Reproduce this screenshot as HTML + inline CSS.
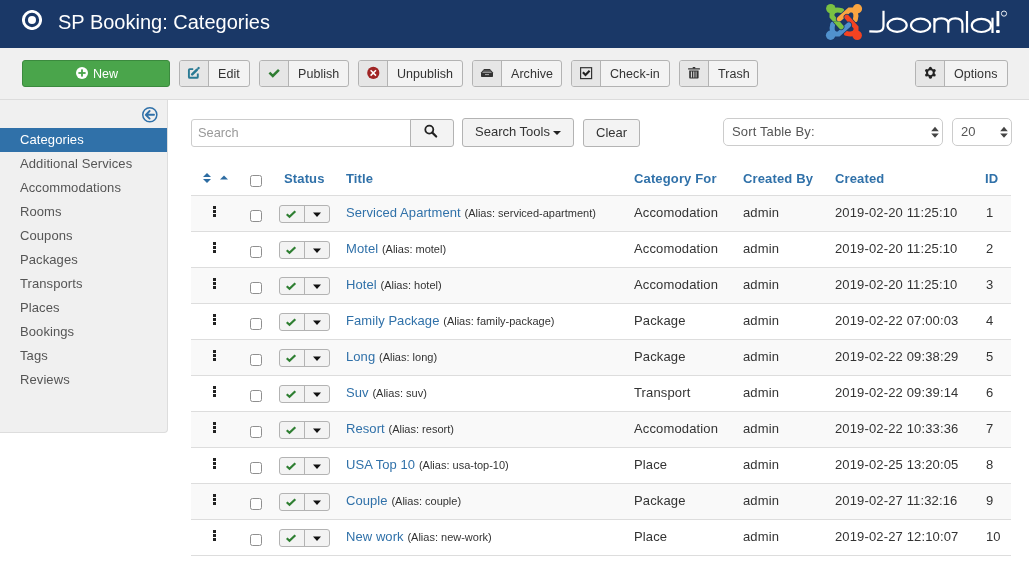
<!DOCTYPE html>
<html><head><meta charset="utf-8">
<style>
*{box-sizing:border-box;margin:0;padding:0}
html,body{width:1029px;height:568px;overflow:hidden;background:#fff}
body{font-family:"Liberation Sans",sans-serif;font-size:13px;color:#333;position:relative;letter-spacing:0.14px}
.abs{position:absolute}
#hdr{left:0;top:0;width:1029px;height:48px;background:#1a3867}
#hdr .ttl{left:58px;top:10px;color:#fff;font-size:20px;line-height:24px;white-space:nowrap;letter-spacing:0}
#sub{left:0;top:48px;width:1029px;height:52px;background:#f0f0f0;border-bottom:1px solid #dcdcdc}
.btn{position:absolute;top:60px;height:27px;border:1px solid #b3b3b3;border-radius:3px;background:#f3f3f3;color:#333;font-size:12.5px;line-height:25px;white-space:nowrap;overflow:hidden;letter-spacing:0.05px}
.btn .ic{position:absolute;left:0;top:0;width:29px;height:25px;line-height:0;background:#e6e6e6;border-right:1px solid #b3b3b3}
.btn .tx{position:absolute;top:1px}
.btn.green{background:#4aa54b;border-color:#3b8a3e;color:#fff}
#side{left:0;top:100px;width:168px;height:333px;background:#f0f0f0;border-right:1px solid #ddd;border-bottom:1px solid #ddd;border-bottom-right-radius:4px}
.nav{position:absolute;left:0;width:167px;height:24px;line-height:24px;padding-left:20px;color:#555;font-size:13px;letter-spacing:0.09px}
.nav.act{background:#3071a9;color:#fff}
.inp{position:absolute;border:1px solid #ccc;background:#fff;border-radius:3px}
.al{font-size:11px;color:#333;letter-spacing:0}
.thead .h{position:absolute;top:170px;line-height:18px;color:#3071a9;font-weight:bold}
.sorti{position:absolute;left:203px;top:173px;line-height:0}
.sorti2{position:absolute;left:220px;top:175px;line-height:0}
.row{position:absolute;left:191px;width:820px;height:36px;border-top:1px solid #ddd}
.row.odd{background:#f9f9f9}
.row .c{position:absolute;top:8px;line-height:18px;white-space:nowrap}
.row .ttl{left:155px}
.row .ttl a{color:#3071a9;letter-spacing:0.07px}
.row .cf{left:443px}
.row .cby{left:552px}
.row .cr{left:644px}
.row .cid{left:795px}
.drag{position:absolute;left:22px;top:10px;width:3px;height:11px;background:repeating-linear-gradient(#222 0 3px,transparent 3px 4px)}
.cb{position:absolute;width:12px;height:12px;border:1px solid #8f8f8f;border-radius:2.5px;background:#fff}
.hcb{left:250px;top:175px}
.rcb{left:59px;top:14px}
.grp{position:absolute;left:88px;top:9px;width:51px;height:18px;border:1px solid #b3b3b3;border-radius:3px;background:#f3f3f3}
.grp .gl{position:absolute;left:0;top:0;width:25px;height:16px;border-right:1px solid #b3b3b3;text-align:center;line-height:0;padding-top:3px}
.grp .gr{position:absolute;left:25px;top:0;width:24px;height:16px;text-align:center;line-height:0;padding-top:5.6px}
#wrap{position:absolute;left:0;top:0;width:1029px;height:568px;will-change:transform}
</style></head><body><div id="wrap">
<div id="hdr" class="abs">
  <svg class="abs" style="left:22px;top:10px" width="20" height="20" viewBox="0 0 20 20"><circle cx="10" cy="10" r="8.6" fill="none" stroke="#fff" stroke-width="2.9"/><circle cx="10" cy="10" r="4" fill="#fff"/></svg>
  <div class="ttl abs">SP Booking: Categories</div>
  <svg class="abs" style="left:822px;top:0" width="200" height="44" viewBox="822 0 200 44">
    <g transform="translate(822,0)"><g transform="rotate(0 22 22)"><path d="M19.6,10.7 Q12,8.6 10,13.5 V16.6 L19.2,26.8" fill="none" stroke="#1a3867" stroke-width="6.4" stroke-linecap="round"/><path d="M19.6,10.7 Q12,8.6 10,13.5 V16.6 L19.2,26.8" fill="none" stroke="#7ac143" stroke-width="5" stroke-linecap="round"/><circle cx="8.8" cy="8.6" r="4.7" fill="#7ac143"/></g><g transform="rotate(90 22 22)"><path d="M19.6,10.7 Q12,8.6 10,13.5 V16.6 L19.2,26.8" fill="none" stroke="#1a3867" stroke-width="6.4" stroke-linecap="round"/><path d="M19.6,10.7 Q12,8.6 10,13.5 V16.6 L19.2,26.8" fill="none" stroke="#f9a541" stroke-width="5" stroke-linecap="round"/><circle cx="8.8" cy="8.6" r="4.7" fill="#f9a541"/></g><g transform="rotate(180 22 22)"><path d="M19.6,10.7 Q12,8.6 10,13.5 V16.6 L19.2,26.8" fill="none" stroke="#1a3867" stroke-width="6.4" stroke-linecap="round"/><path d="M19.6,10.7 Q12,8.6 10,13.5 V16.6 L19.2,26.8" fill="none" stroke="#f44321" stroke-width="5" stroke-linecap="round"/><circle cx="8.8" cy="8.6" r="4.7" fill="#f44321"/></g><g transform="rotate(270 22 22)"><path d="M19.6,10.7 Q12,8.6 10,13.5 V16.6 L19.2,26.8" fill="none" stroke="#1a3867" stroke-width="6.4" stroke-linecap="round"/><path d="M19.6,10.7 Q12,8.6 10,13.5 V16.6 L19.2,26.8" fill="none" stroke="#5091cd" stroke-width="5" stroke-linecap="round"/><circle cx="8.8" cy="8.6" r="4.7" fill="#5091cd"/></g><clipPath id="cl"><rect x="11" y="21.5" width="15" height="12"/></clipPath><g clip-path="url(#cl)"><path d="M19.6,10.7 Q12,8.6 10,13.5 V16.6 L19.2,26.8" fill="none" stroke="#1a3867" stroke-width="6.4" stroke-linecap="round"/><path d="M19.6,10.7 Q12,8.6 10,13.5 V16.6 L19.2,26.8" fill="none" stroke="#7ac143" stroke-width="5" stroke-linecap="round"/></g></g>
    <g fill="none" stroke="#fff" stroke-width="2.2">
      <path d="M883.5,10.8 V26 C883.5,30.2 881.5,31.7 877,31.7 L869.3,31.3"/>
      <ellipse cx="897.1" cy="25.25" rx="9.6" ry="6.6"/>
      <ellipse cx="920.6" cy="25.25" rx="9.6" ry="6.6"/>
      <path d="M934.4,32.8 V18 M934.4,24 Q934.4,18.4 941.35,18.4 Q948.3,18.4 948.3,24 V32.8 M948.3,24 Q948.3,18.4 955.35,18.4 Q962.4,18.4 962.4,24 V32.8"/>
      <path d="M967,11 V32.8"/>
      <ellipse cx="981.4" cy="25.4" rx="9.6" ry="6.6"/>
      <path d="M992.5,17.7 V33"/>
      <path d="M997.9,11 V26.3" stroke-width="2.8"/>
      <circle cx="1004" cy="13.6" r="2.6" stroke-width="0.9"/>
    </g>
    <rect x="996" y="30" width="3.8" height="3" rx="1" fill="#fff"/>
  </svg>
</div>
<div id="sub" class="abs"></div>

<div class="btn green" style="left:22px;width:148px"><svg class="abs" style="left:52px;top:5px" width="14" height="14" viewBox="0 0 14 14"><circle cx="7" cy="7" r="6" fill="#fff"/><rect x="6.1" y="3.4" width="1.8" height="7.2" fill="#4aa54b"/><rect x="3.4" y="6.1" width="7.2" height="1.8" fill="#4aa54b"/></svg><span class="tx" style="left:70px">New</span></div>
<div class="btn" style="left:179px;width:71px"><span class="ic"><svg width="28" height="25" viewBox="0 0 28 25"><path d="M13.2,8.1 H9.8 Q8.9,8.1 8.9,9 V15.9 Q8.9,16.8 9.8,16.8 H16.9 Q17.8,16.8 17.8,15.9 V12.6" fill="none" stroke="#2a7a94" stroke-width="1.9"/><path d="M12.2,13.4 L16.8,8.8" stroke="#2a7a94" stroke-width="2.6" stroke-linecap="round"/><path d="M18.3,7.4 L18.7,7" stroke="#2a7a94" stroke-width="2.2" stroke-linecap="round"/></svg></span><span class="tx" style="left:38px">Edit</span></div>
<div class="btn" style="left:259px;width:90px"><span class="ic"><svg width="28" height="25" viewBox="0 0 28 25"><path d="M9.4,11.6 L12.8,14.9 L18.9,8.8" fill="none" stroke="#2f7d32" stroke-width="2.5"/></svg></span><span class="tx" style="left:38px">Publish</span></div>
<div class="btn" style="left:358px;width:105px"><span class="ic"><svg width="28" height="25" viewBox="0 0 28 25"><circle cx="14.3" cy="11.9" r="6.1" fill="#a02525"/><path d="M11.6,9.2 L17,14.6 M17,9.2 L11.6,14.6" stroke="#fff" stroke-width="1.5"/></svg></span><span class="tx" style="left:38px">Unpublish</span></div>
<div class="btn" style="left:472px;width:90px"><span class="ic"><svg width="28" height="25" viewBox="0 0 28 25"><path d="M11.1,8 H16.9 L20,11.6 V15.2 Q20,16 19.2,16 H8.8 Q8,16 8,15.2 V11.6 Z" fill="#333"/><rect x="10.2" y="9.4" width="7.6" height="1.6" fill="#666"/><rect x="9.5" y="11.2" width="9" height="0.8" fill="#aaa"/><rect x="12" y="13.2" width="4" height="0.9" fill="#bbb"/></svg></span><span class="tx" style="left:38px">Archive</span></div>
<div class="btn" style="left:571px;width:99px"><span class="ic"><svg width="28" height="25" viewBox="0 0 28 25"><rect x="8.6" y="6.7" width="11" height="10.9" fill="none" stroke="#333" stroke-width="1.2"/><path d="M10.9,11.3 L13.5,14 L17.6,9.7" fill="none" stroke="#222" stroke-width="2.1"/></svg></span><span class="tx" style="left:38px">Check-in</span></div>
<div class="btn" style="left:679px;width:79px"><span class="ic"><svg width="28" height="25" viewBox="0 0 28 25"><rect x="8" y="7.2" width="12" height="1.4" rx="0.5" fill="#333"/><rect x="12.6" y="6.1" width="2.8" height="1.4" rx="0.7" fill="#333"/><path d="M9.2,9.4 H18.6 V16.8 Q18.6,17.6 17.8,17.6 H10 Q9.2,17.6 9.2,16.8 Z" fill="#333"/><rect x="10.9" y="10.5" width="1" height="6" fill="#e6e6e6"/><rect x="13.3" y="10.5" width="1" height="6" fill="#e6e6e6"/><rect x="15.5" y="10.5" width="1.2" height="6" fill="#aaa"/></svg></span><span class="tx" style="left:38px">Trash</span></div>
<div class="btn" style="left:915px;width:93px"><span class="ic"><svg width="28" height="25" viewBox="0 0 28 25"><g transform="translate(14.4,11.75)"><circle r="4.4" fill="#222"/><g fill="#222"><circle cx="0" cy="-4.4" r="1.5"/><circle cx="3.81" cy="-2.2" r="1.5"/><circle cx="3.81" cy="2.2" r="1.5"/><circle cx="0" cy="4.4" r="1.5"/><circle cx="-3.81" cy="2.2" r="1.5"/><circle cx="-3.81" cy="-2.2" r="1.5"/></g><circle r="2.4" fill="#e6e6e6"/></g></svg></span><span class="tx" style="left:38px">Options</span></div>

<div id="side" class="abs">
  <div class="nav act" style="top:28px">Categories</div>
  <div class="nav" style="top:52px">Additional Services</div>
  <div class="nav" style="top:76px">Accommodations</div>
  <div class="nav" style="top:100px">Rooms</div>
  <div class="nav" style="top:124px">Coupons</div>
  <div class="nav" style="top:148px">Packages</div>
  <div class="nav" style="top:172px">Transports</div>
  <div class="nav" style="top:196px">Places</div>
  <div class="nav" style="top:220px">Bookings</div>
  <div class="nav" style="top:244px">Tags</div>
  <div class="nav" style="top:268px">Reviews</div>
</div>

<div class="inp" style="left:191px;top:119px;width:220px;height:28px;border-radius:3px 0 0 3px"></div>
<div class="abs" style="left:198px;top:119px;line-height:28px;color:#999;font-size:12.8px;letter-spacing:0">Search</div>
<div class="btn" style="left:410px;top:119px;width:44px;height:28px;border-radius:0 3px 3px 0"><svg class="abs" style="left:0;top:0" width="42" height="26" viewBox="0 0 42 26"><circle cx="18.3" cy="9.6" r="4" fill="none" stroke="#222" stroke-width="1.8"/><path d="M21.3,12.6 L25.2,16.5" stroke="#222" stroke-width="2.2" stroke-linecap="round"/></svg></div>
<div class="btn" style="left:462px;top:118px;width:112px;height:29px;font-size:13px"><span class="tx" style="left:12px;top:0;line-height:25px;letter-spacing:0">Search Tools</span><i class="abs" style="left:90px;top:12px;width:0;height:0;border-left:4px solid transparent;border-right:4px solid transparent;border-top:4px solid #222"></i></div>
<div class="btn" style="left:583px;top:119px;width:57px;height:28px;font-size:13px"><span class="tx" style="left:12px;top:0;letter-spacing:0">Clear</span></div>
<div class="inp" style="left:723px;top:118px;width:220px;height:28px;border-radius:5px"></div>
<div class="abs" style="left:732px;top:118px;line-height:28px;color:#555">Sort Table By:</div>
<svg class="abs" style="left:930px;top:125px" width="10" height="14" viewBox="0 0 10 14"><path d="M1.2,6.2 L5,1.8 L8.8,6.2 Z M1.2,8.4 L8.8,8.4 L5,12.8 Z" fill="#444"/></svg>
<div class="inp" style="left:952px;top:118px;width:60px;height:28px;border-radius:5px"></div>
<div class="abs" style="left:961px;top:118px;line-height:28px;color:#555">20</div>
<svg class="abs" style="left:999px;top:125px" width="10" height="14" viewBox="0 0 10 14"><path d="M1.2,6.2 L5,1.8 L8.8,6.2 Z M1.2,8.4 L8.8,8.4 L5,12.8 Z" fill="#444"/></svg>

<svg class="abs" style="left:141px;top:106px" width="18" height="18" viewBox="0 0 18 18"><circle cx="8.8" cy="8.8" r="7.05" fill="none" stroke="#3071a9" stroke-width="1.5"/><path d="M13,8.8 H5 M8.6,5 L4.8,8.8 L8.6,12.6" fill="none" stroke="#3071a9" stroke-width="1.9" stroke-linecap="round" stroke-linejoin="round"/></svg>

<div class="thead">
<span class="sorti"><svg width="8" height="10" viewBox="0 0 8 10"><path d="M0 4 L4 0 L8 4 Z M0 6 L8 6 L4 10 Z" fill="#2d6ca2"/></svg></span>
<span class="sorti2"><svg width="8" height="5" viewBox="0 0 8 5"><path d="M0 4.5 L4 0.5 L8 4.5 Z" fill="#2d6ca2"/></svg></span>
<i class="cb hcb"></i>
<span class="h" style="left:284px">Status</span>
<span class="h" style="left:346px">Title</span>
<span class="h" style="left:634px">Category For</span>
<span class="h" style="left:743px">Created By</span>
<span class="h" style="left:835px">Created</span>
<span class="h" style="left:985px">ID</span>
</div>
<!--ROWS-->
<div class="row odd" style="top:195px"><i class="drag"></i><i class="cb rcb"></i><span class="grp"><span class="gl"><svg width="12" height="10" viewBox="0 0 12 10"><path d="M0.7 5.2 L3.5 7.8 L9.3 2.2" fill="none" stroke="#2f7f32" stroke-width="2.2"/></svg></span><span class="gr"><svg width="10" height="6" viewBox="0 0 10 6"><path d="M1 0.5 H9 L5 5 Z" fill="#111"/></svg></span></span><span class="c ttl"><a>Serviced Apartment</a> <span class="al">(Alias: serviced-apartment)</span></span><span class="c cf">Accomodation</span><span class="c cby">admin</span><span class="c cr">2019-02-20 11:25:10</span><span class="c cid">1</span></div>
<div class="row" style="top:231px"><i class="drag"></i><i class="cb rcb"></i><span class="grp"><span class="gl"><svg width="12" height="10" viewBox="0 0 12 10"><path d="M0.7 5.2 L3.5 7.8 L9.3 2.2" fill="none" stroke="#2f7f32" stroke-width="2.2"/></svg></span><span class="gr"><svg width="10" height="6" viewBox="0 0 10 6"><path d="M1 0.5 H9 L5 5 Z" fill="#111"/></svg></span></span><span class="c ttl"><a>Motel</a> <span class="al">(Alias: motel)</span></span><span class="c cf">Accomodation</span><span class="c cby">admin</span><span class="c cr">2019-02-20 11:25:10</span><span class="c cid">2</span></div>
<div class="row odd" style="top:267px"><i class="drag"></i><i class="cb rcb"></i><span class="grp"><span class="gl"><svg width="12" height="10" viewBox="0 0 12 10"><path d="M0.7 5.2 L3.5 7.8 L9.3 2.2" fill="none" stroke="#2f7f32" stroke-width="2.2"/></svg></span><span class="gr"><svg width="10" height="6" viewBox="0 0 10 6"><path d="M1 0.5 H9 L5 5 Z" fill="#111"/></svg></span></span><span class="c ttl"><a>Hotel</a> <span class="al">(Alias: hotel)</span></span><span class="c cf">Accomodation</span><span class="c cby">admin</span><span class="c cr">2019-02-20 11:25:10</span><span class="c cid">3</span></div>
<div class="row" style="top:303px"><i class="drag"></i><i class="cb rcb"></i><span class="grp"><span class="gl"><svg width="12" height="10" viewBox="0 0 12 10"><path d="M0.7 5.2 L3.5 7.8 L9.3 2.2" fill="none" stroke="#2f7f32" stroke-width="2.2"/></svg></span><span class="gr"><svg width="10" height="6" viewBox="0 0 10 6"><path d="M1 0.5 H9 L5 5 Z" fill="#111"/></svg></span></span><span class="c ttl"><a>Family Package</a> <span class="al">(Alias: family-package)</span></span><span class="c cf">Package</span><span class="c cby">admin</span><span class="c cr">2019-02-22 07:00:03</span><span class="c cid">4</span></div>
<div class="row odd" style="top:339px"><i class="drag"></i><i class="cb rcb"></i><span class="grp"><span class="gl"><svg width="12" height="10" viewBox="0 0 12 10"><path d="M0.7 5.2 L3.5 7.8 L9.3 2.2" fill="none" stroke="#2f7f32" stroke-width="2.2"/></svg></span><span class="gr"><svg width="10" height="6" viewBox="0 0 10 6"><path d="M1 0.5 H9 L5 5 Z" fill="#111"/></svg></span></span><span class="c ttl"><a>Long</a> <span class="al">(Alias: long)</span></span><span class="c cf">Package</span><span class="c cby">admin</span><span class="c cr">2019-02-22 09:38:29</span><span class="c cid">5</span></div>
<div class="row" style="top:375px"><i class="drag"></i><i class="cb rcb"></i><span class="grp"><span class="gl"><svg width="12" height="10" viewBox="0 0 12 10"><path d="M0.7 5.2 L3.5 7.8 L9.3 2.2" fill="none" stroke="#2f7f32" stroke-width="2.2"/></svg></span><span class="gr"><svg width="10" height="6" viewBox="0 0 10 6"><path d="M1 0.5 H9 L5 5 Z" fill="#111"/></svg></span></span><span class="c ttl"><a>Suv</a> <span class="al">(Alias: suv)</span></span><span class="c cf">Transport</span><span class="c cby">admin</span><span class="c cr">2019-02-22 09:39:14</span><span class="c cid">6</span></div>
<div class="row odd" style="top:411px"><i class="drag"></i><i class="cb rcb"></i><span class="grp"><span class="gl"><svg width="12" height="10" viewBox="0 0 12 10"><path d="M0.7 5.2 L3.5 7.8 L9.3 2.2" fill="none" stroke="#2f7f32" stroke-width="2.2"/></svg></span><span class="gr"><svg width="10" height="6" viewBox="0 0 10 6"><path d="M1 0.5 H9 L5 5 Z" fill="#111"/></svg></span></span><span class="c ttl"><a>Resort</a> <span class="al">(Alias: resort)</span></span><span class="c cf">Accomodation</span><span class="c cby">admin</span><span class="c cr">2019-02-22 10:33:36</span><span class="c cid">7</span></div>
<div class="row" style="top:447px"><i class="drag"></i><i class="cb rcb"></i><span class="grp"><span class="gl"><svg width="12" height="10" viewBox="0 0 12 10"><path d="M0.7 5.2 L3.5 7.8 L9.3 2.2" fill="none" stroke="#2f7f32" stroke-width="2.2"/></svg></span><span class="gr"><svg width="10" height="6" viewBox="0 0 10 6"><path d="M1 0.5 H9 L5 5 Z" fill="#111"/></svg></span></span><span class="c ttl"><a>USA Top 10</a> <span class="al">(Alias: usa-top-10)</span></span><span class="c cf">Place</span><span class="c cby">admin</span><span class="c cr">2019-02-25 13:20:05</span><span class="c cid">8</span></div>
<div class="row odd" style="top:483px"><i class="drag"></i><i class="cb rcb"></i><span class="grp"><span class="gl"><svg width="12" height="10" viewBox="0 0 12 10"><path d="M0.7 5.2 L3.5 7.8 L9.3 2.2" fill="none" stroke="#2f7f32" stroke-width="2.2"/></svg></span><span class="gr"><svg width="10" height="6" viewBox="0 0 10 6"><path d="M1 0.5 H9 L5 5 Z" fill="#111"/></svg></span></span><span class="c ttl"><a>Couple</a> <span class="al">(Alias: couple)</span></span><span class="c cf">Package</span><span class="c cby">admin</span><span class="c cr">2019-02-27 11:32:16</span><span class="c cid">9</span></div>
<div class="row" style="top:519px"><i class="drag"></i><i class="cb rcb"></i><span class="grp"><span class="gl"><svg width="12" height="10" viewBox="0 0 12 10"><path d="M0.7 5.2 L3.5 7.8 L9.3 2.2" fill="none" stroke="#2f7f32" stroke-width="2.2"/></svg></span><span class="gr"><svg width="10" height="6" viewBox="0 0 10 6"><path d="M1 0.5 H9 L5 5 Z" fill="#111"/></svg></span></span><span class="c ttl"><a>New work</a> <span class="al">(Alias: new-work)</span></span><span class="c cf">Place</span><span class="c cby">admin</span><span class="c cr">2019-02-27 12:10:07</span><span class="c cid">10</span></div>
<!--/ROWS-->
<div class="abs" style="left:191px;top:555px;width:820px;height:1px;background:#ddd"></div>
</div></body></html>
